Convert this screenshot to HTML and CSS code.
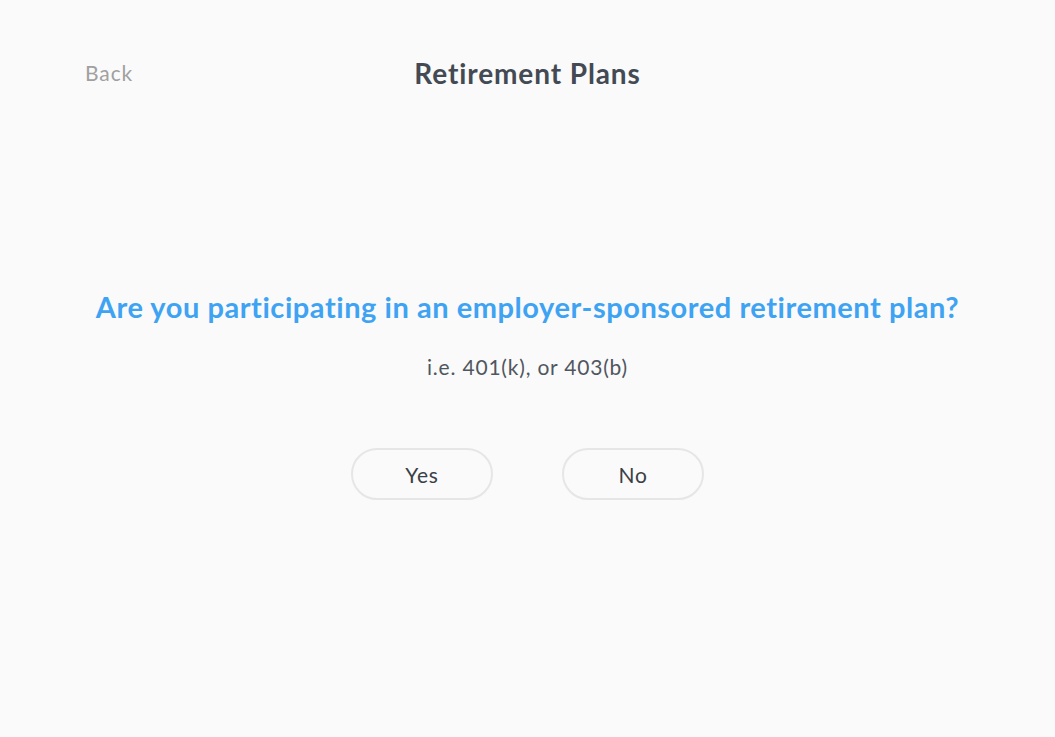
FILE: index.html
```html
<!DOCTYPE html>
<html>
<head>
<meta charset="utf-8">
<link rel="stylesheet" href="styles.css">
</head>
<body>
<div class="page">
  <header class="header">
    <a class="back">Back</a>
    <h1 class="title">Retirement Plans</h1>
  </header>
  <main class="content">
    <h2 class="question">Are you participating in an employer-sponsored retirement plan?</h2>
    <p class="hint">i.e. 401(k), or 403(b)</p>
    <div class="actions">
      <button class="btn">Yes</button>
      <button class="btn">No</button>
    </div>
  </main>
</div>
</body>
</html>
```
FILE: styles.css
```css
html, body {
  margin: 0;
  padding: 0;
  background: #fafafa;
  font-family: Lato, "Open Sans", sans-serif;
}
.page {
  width: 1055px;
  height: 737px;
  display: flex;
  flex-direction: column;
}
.header {
  position: relative;
  height: 146px;
  display: flex;
  justify-content: center;
  align-items: flex-start;
  padding-top: 56px;
  box-sizing: border-box;
}
.back {
  position: absolute;
  left: 85px;
  top: 60px;
  font-size: 21px;
  letter-spacing: 0.9px;
  color: #a0a0a0;
  line-height: 26px;
}
.title {
  margin: 0;
  font-size: 28px;
  letter-spacing: 0.9px;
  font-weight: 700;
  color: #434a54;
  line-height: 34px;
}
.content {
  display: flex;
  flex-direction: column;
  align-items: center;
  padding-top: 144px;
}
.question {
  margin: 0;
  font-size: 29px;
  letter-spacing: 0.55px;
  font-weight: 700;
  color: #3ea3f2;
  line-height: 34px;
}
.hint {
  margin: 30px 0 0;
  font-size: 21px;
  letter-spacing: 0.8px;
  color: #505660;
  line-height: 26px;
}
.actions {
  display: flex;
  gap: 69px;
  margin-top: 68px;
}
.btn {
  width: 142px;
  height: 52px;
  border: 2px solid #e6e6e6;
  border-radius: 26px;
  background: #fafafa;
  font-family: inherit;
  font-size: 21px;
  letter-spacing: 0.8px;
  color: #3a3f47;
}
```
